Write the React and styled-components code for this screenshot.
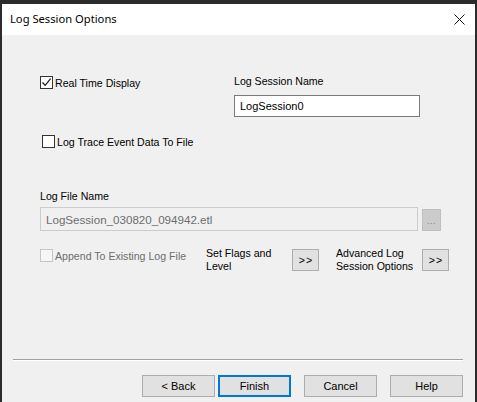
import React from "react";
import styled, { createGlobalStyle } from "styled-components";

const GlobalStyle = createGlobalStyle`
    html, body {
        margin: 0;
        padding: 0;
        background: #2b2b2b;
    }
    * { box-sizing: border-box; }
`;

const Frame = styled.div`
    width: 477px;
    height: 402px;
    background: #2b2b2b;
    padding: 4px 2px 0 2px;
    overflow: hidden;
`;

const Window = styled.div`
    width: 473px;
    height: 398px;
    background: #f0f0f0;
    display: flex;
    flex-direction: column;
    font-family: "Liberation Sans", Arial, sans-serif;
    font-size: 10.6px;
    color: #000;
`;

const TitleBar = styled.div`
    height: 31px;
    background: #fff;
    display: flex;
    align-items: center;
    justify-content: space-between;
    padding: 0 10px 2px 8px;
`;

const Title = styled.div`
    font-family: "Segoe UI", "Noto Sans", sans-serif;
    font-size: 11.2px;
`;

const CloseIcon = styled.svg`
    width: 11px;
    height: 11px;
    margin-top: 2px;
`;

const Body = styled.div`
    flex: 1;
    display: flex;
    flex-direction: column;
    padding: 0 0 0 38px;
    position: relative;
`;

const SessionRow = styled.div`
    display: flex;
    margin-top: 40px;
`;

const LeftCol = styled.div`
    width: 194px;
    padding-top: 1px;
`;

const RightCol = styled.div`
    display: flex;
    flex-direction: column;
`;

const CheckRow = styled.label`
    display: flex;
    align-items: center;
    gap: 2px;
    width: ${(p) => (p.$width ? `${p.$width}px` : "auto")};
    margin-left: ${(p) => p.$indent || 0}px;
    margin-top: ${(p) => p.$top || 0}px;
    color: ${(p) => (p.$disabled ? "#6d6d6d" : "#000")};
    white-space: nowrap;
    flex-shrink: 0;
`;

const Box = styled.span`
    width: 13px;
    height: 13px;
    border: 1px solid ${(p) => (p.$disabled ? "#c6c6c6" : "#333")};
    background: ${(p) => (p.$disabled ? "#f6f6f6" : "#fff")};
    display: flex;
    align-items: center;
    justify-content: center;
    flex-shrink: 0;
`;

const FieldLabel = styled.div`
    line-height: 13px;
`;

const TextField = styled.div`
    width: ${(p) => p.$width}px;
    height: ${(p) => p.$height}px;
    margin-top: ${(p) => p.$top || 0}px;
    border: 1px solid ${(p) => (p.$disabled ? "#cccccc" : "#7a7a7a")};
    background: ${(p) => (p.$disabled ? "#f0f0f0" : "#fff")};
    color: ${(p) => (p.$disabled ? "#6d6d6d" : "#000")};
    display: flex;
    align-items: center;
    padding-left: 5px;
    font-size: ${(p) => (p.$disabled ? 11.6 : 11)}px;
`;

const FileSection = styled.div`
    margin-top: 42px;
    display: flex;
    flex-direction: column;
`;

const FileRow = styled.div`
    display: flex;
    align-items: flex-end;
    gap: 4px;
`;

const Browse = styled.div`
    width: 19px;
    height: 22px;
    background: #cccccc;
    border: 1px solid #bfbfbf;
    color: #7a7a7a;
    display: flex;
    align-items: flex-end;
    justify-content: center;
    padding-bottom: 4px;
    font-size: 9px;
    letter-spacing: 0.5px;
`;

const OptionsRow = styled.div`
    display: flex;
    align-items: flex-start;
    margin-top: 17px;
`;

const TwoLine = styled.div`
    line-height: 13px;
    width: ${(p) => p.$width}px;
    margin-left: ${(p) => p.$left || 0}px;
    margin-top: -1px;
    flex-shrink: 0;
`;

const SmallButton = styled.div`
    width: 27px;
    height: 22px;
    margin-top: 1px;
    background: #e1e1e1;
    border: 1px solid #adadad;
    display: flex;
    align-items: center;
    justify-content: center;
    letter-spacing: 1px;
    padding-left: 1px;
    flex-shrink: 0;
`;

const Separator = styled.div`
    position: absolute;
    left: 11px;
    top: 324px;
    width: 450px;
    height: 2px;
    border-top: 1px solid #a0a0a0;
    border-bottom: 1px solid #fff;
`;

const Footer = styled.div`
    margin-top: auto;
    margin-left: -38px;
    display: flex;
    justify-content: flex-end;
    padding: 0 12px 5px 0;
`;

const DialogButton = styled.div`
    width: 73px;
    height: 22px;
    margin-left: ${(p) => p.$gap}px;
    background: #e1e1e1;
    border: ${(p) => (p.$default ? "2px solid #0078d7" : "1px solid #adadad")};
    display: flex;
    align-items: center;
    justify-content: center;
    font-size: 11px;
`;

function CheckBox({ checked, disabled }) {
    return (
        <Box $disabled={disabled}>
            {checked && (
                <svg width="11" height="11" viewBox="0 0 11 11">
                    <path d="M1.5 5.5 L4.2 8.3 L9.6 1.6" fill="none" stroke="#222" strokeWidth="1.3" />
                </svg>
            )}
        </Box>
    );
}

export default function App() {
    return (
        <Frame>
            <GlobalStyle />
            <Window>
                <TitleBar>
                    <Title>Log Session Options</Title>
                    <CloseIcon viewBox="0 0 11 11">
                        <path d="M0.5 0.5 L10.5 10.5 M10.5 0.5 L0.5 10.5" stroke="#111" strokeWidth="1" />
                    </CloseIcon>
                </TitleBar>
                <Body>
                    <SessionRow>
                        <LeftCol>
                            <CheckRow>
                                <CheckBox checked />
                                Real Time Display
                            </CheckRow>
                        </LeftCol>
                        <RightCol>
                            <FieldLabel>Log Session Name</FieldLabel>
                            <TextField $width={186} $height={22} $top={7}>LogSession0</TextField>
                        </RightCol>
                    </SessionRow>

                    <CheckRow $indent={2} $top={18}>
                        <CheckBox />
                        Log Trace Event Data To File
                    </CheckRow>

                    <FileSection>
                        <FieldLabel>Log File Name</FieldLabel>
                        <FileRow>
                            <TextField $width={378} $height={24} $top={4} $disabled>
                                LogSession_030820_094942.etl
                            </TextField>
                            <Browse>...</Browse>
                        </FileRow>
                    </FileSection>

                    <OptionsRow>
                        <CheckRow $disabled $top={1} $width={166}>
                            <CheckBox disabled />
                            Append To Existing Log File
                        </CheckRow>
                        <TwoLine $width={86}>Set Flags and<br />Level</TwoLine>
                        <SmallButton>&gt;&gt;</SmallButton>
                        <TwoLine $width={86} $left={17}>Advanced Log<br />Session Options</TwoLine>
                        <SmallButton>&gt;&gt;</SmallButton>
                    </OptionsRow>

                    <Separator />

                    <Footer>
                        <DialogButton $gap={0}>&lt; Back</DialogButton>
                        <DialogButton $gap={3} $default>Finish</DialogButton>
                        <DialogButton $gap={13}>Cancel</DialogButton>
                        <DialogButton $gap={13}>Help</DialogButton>
                    </Footer>
                </Body>
            </Window>
        </Frame>
    );
}
